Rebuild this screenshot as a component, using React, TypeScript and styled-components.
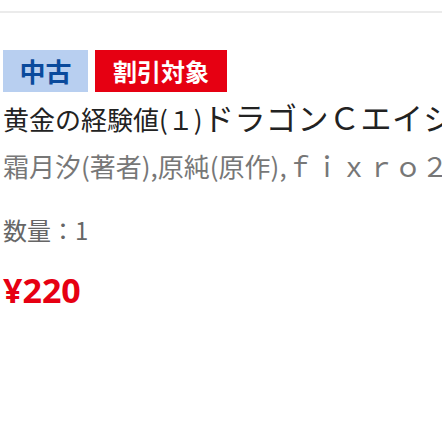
import React from "react";
import styled, { createGlobalStyle } from "styled-components";

const Global = createGlobalStyle`
  html, body { margin: 0; padding: 0; background: #fff; }
  body { font-family: "Noto Sans CJK JP", "Noto Sans", sans-serif; }
`;

const Item = styled.section`
  margin-top: 11px;
  border-top: 2px solid #ebebeb;
  padding: 37px 0 0 3px;
  overflow: hidden;
  width: 439px;
`;

const Badges = styled.div`
  display: flex;
  gap: 7px;
`;

const Badge = styled.span<{ $bg: string; $fg: string; $w: number; $size: number }>`
  display: inline-flex;
  align-items: center;
  justify-content: center;
  width: ${(p) => p.$w}px;
  height: 42px;
  background: ${(p) => p.$bg};
  color: ${(p) => p.$fg};
  font-size: ${(p) => p.$size}px;
  font-weight: 700;
  line-height: 1;
`;

const Title = styled.div`
  margin-top: 5px;
  font-size: 26px;
  line-height: 44px;
  height: 44px;
  color: #222;
  white-space: nowrap;
`;

const Authors = styled.div`
  margin-top: 3px;
  font-size: 26px;
  line-height: 44px;
  height: 44px;
  color: #777;
  white-space: nowrap;
`;

const Wide = styled.span<{ $size: number; $gap?: number }>`
  font-size: ${(p) => p.$size}px;
  letter-spacing: ${(p) => p.$gap ?? 0}px;
  margin-left: ${(p) => p.$gap ?? 0}px;
  line-height: 0;
`;

const Qty = styled.div`
  margin-top: 22px;
  font-size: 24px;
  line-height: 40px;
  color: #666;
`;

const Price = styled.div`
  margin-top: 18px;
  font-size: 34px;
  line-height: 44px;
  font-weight: 700;
  color: #e60012;
  font-family: "Noto Sans", "Noto Sans CJK JP", sans-serif;
`;

export default function App() {
  return (
    <>
      <Global />
      <Item>
        <Badges>
          <Badge $bg="#b8cff0" $fg="#0a4a9c" $w={85} $size={26}>中古</Badge>
          <Badge $bg="#e60012" $fg="#ffffff" $w={132} $size={24}>割引対象</Badge>
        </Badges>
        <Title>
          黄金の経験値(１)<Wide $size={31} $gap={0.5}>ドラゴンＣエイジ</Wide>
        </Title>
        <Authors>
          霜月汐(著者),原純(原作),<Wide $size={27}>ｆｉｘｒｏ２</Wide>
        </Authors>
        <Qty>数量：1</Qty>
        <Price>¥220</Price>
      </Item>
    </>
  );
}
